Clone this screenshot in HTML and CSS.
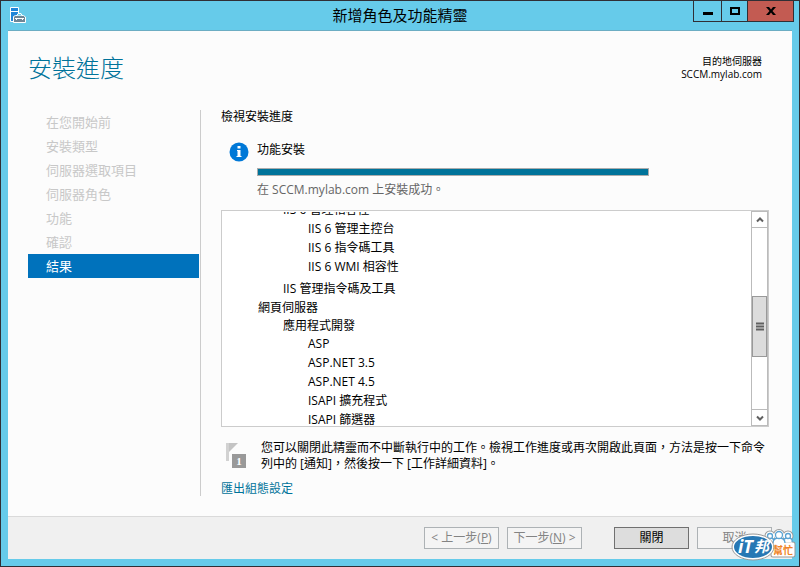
FILE: index.html
```html
<!DOCTYPE html>
<html lang="zh-Hant">
<head>
  <meta charset="UTF-8" />
  <meta name="viewport" content="width=device-width, initial-scale=1.0" />
  <title>新增角色及功能精靈</title>
  <link rel="stylesheet" href="styles.css">
</head>

<body>
  <div class="window">
    <header class="titlebar">
      <svg class="app-icon" width="18" height="18" viewBox="0 0 18 18">
        <path d="M1.500 1.500h8v14h-8z" fill="#1f86d8" stroke="#fff" />
        <path d="M2 5.500h7" stroke="#fff" />
        <path d="M4.500 16.500V10.500L6.500 9.500h8l2 1.500v5.500z" fill="#6f8797" stroke="#fff" />
        <path d="M8 9.500l1-2h3l1 2" fill="#66cbea" stroke="#fff" />
        <path d="M6 12.500h9M7.500 12v2M13.500 12v2" stroke="#fff" />
      </svg>
      <h1>新增角色及功能精靈</h1>
      <div class="controls">
        <button class="ctl" aria-label="最小化">
          <svg width="10" height="12" viewBox="0 0 10 12"><path d="M0 7h10v3H0z" /></svg>
        </button>
        <button class="ctl" aria-label="最大化">
          <svg width="10" height="12" viewBox="0 0 10 12"><path fill-rule="evenodd" d="M0 2h10v8H0zM2 4v4h6V4z" /></svg>
        </button>
        <button class="ctl close" aria-label="關閉視窗">
          <svg width="10" height="12" viewBox="0 0 10 12"><path d="M0 2h3l2 2.500L7 2h3L6.500 6l3.500 4H7L5 7.500 3 10H0l3.500-4z" /></svg>
        </button>
      </div>
    </header>

    <div class="client">
      <div class="page-head">
        <h2>安裝進度</h2>
        <p class="target">目的地伺服器<br>SCCM.mylab.com</p>
      </div>

      <div class="page-body">
        <nav class="steps">
          <ul>
            <li>在您開始前</li>
            <li>安裝類型</li>
            <li>伺服器選取項目</li>
            <li>伺服器角色</li>
            <li>功能</li>
            <li>確認</li>
            <li class="active" aria-current="step">結果</li>
          </ul>
        </nav>

        <main>
          <h3>檢視安裝進度</h3>

          <div class="status">
            <svg class="info" width="20" height="20" viewBox="0 0 20 20">
              <circle cx="10" cy="10" r="9.500" fill="#0078d7" />
              <path d="M8.500 4h3v2.500h-3zM8 8h3.500v6h1v1h-5v-1h1V9H8z" fill="#fff" />
            </svg>
            <div class="status-text">
              <label for="progress">功能安裝</label>
              <progress id="progress" value="100" max="100"></progress>
              <p>在 SCCM.mylab.com 上安裝成功。</p>
            </div>
          </div>

          <div class="results">
            <div class="viewport">
              <ul class="tree">
                <li>IIS 6 管理相容性
                  <ul>
                    <li>IIS 6 管理主控台</li>
                    <li>IIS 6 指令碼工具</li>
                    <li>IIS 6 WMI 相容性</li>
                  </ul>
                </li>
                <li>IIS 管理指令碼及工具</li>
                <li class="role">網頁伺服器</li>
                <li class="group">應用程式開發
                  <ul>
                    <li>ASP</li>
                    <li>ASP.NET 3.5</li>
                    <li>ASP.NET 4.5</li>
                    <li>ISAPI 擴充程式</li>
                    <li>ISAPI 篩選器</li>
                  </ul>
                </li>
              </ul>
            </div>
            <div class="scrollbar">
              <button class="arrow" aria-label="向上捲動">
                <svg width="8" height="6" viewBox="0 0 8 6"><path d="M1 4.500l3-3 3 3" /></svg>
              </button>
              <div class="track">
                <div class="thumb">
                  <svg width="8" height="9" viewBox="0 0 8 9"><path d="M0 1.500h8M0 4.500h8M0 7.500h8" /></svg>
                </div>
              </div>
              <button class="arrow" aria-label="向下捲動">
                <svg width="8" height="6" viewBox="0 0 8 6"><path d="M1 1.500l3 3 3-3" /></svg>
              </button>
            </div>
          </div>

          <div class="note">
            <svg class="flag" width="24" height="28" viewBox="0 0 24 28">
              <path d="M3 1h3v18H3z" fill="#d2d2d2" />
              <path d="M6 1h9L6 10z" fill="#c4c4c4" />
              <rect x="9" y="12" width="14" height="14" fill="#999" />
              <text x="16" y="23" text-anchor="middle">1</text>
            </svg>
            <p>您可以關閉此精靈而不中斷執行中的工作。檢視工作進度或再次開啟此頁面，方法是按一下命令列中的 [通知]，然後按一下 [工作詳細資料]。</p>
          </div>

          <a class="export" href="#">匯出組態設定</a>
        </main>
      </div>

      <footer>
        <button disabled>&lt; 上一步(<u>P</u>)</button>
        <button disabled>下一步(<u>N</u>) &gt;</button>
        <button class="primary">關閉</button>
        <button disabled>取消</button>
      </footer>
    </div>

    <svg class="badge" width="66" height="34" viewBox="0 0 66 34">
      <g fill="#999" stroke="#999" stroke-width="5" stroke-linejoin="round">
        <circle cx="39" cy="7" r="3" />
        <circle cx="48" cy="6" r="3.500" />
        <circle cx="57" cy="7" r="3" />
        <path d="M36 12h25" />
        <rect x="42" y="15" width="20" height="11" />
      </g>
      <g fill="#fff" stroke="#fff" stroke-width="3" stroke-linejoin="round">
        <circle cx="39" cy="7" r="3" />
        <circle cx="48" cy="6" r="3.500" />
        <circle cx="57" cy="7" r="3" />
        <path d="M36 12h25" />
        <rect x="42" y="15" width="20" height="11" />
      </g>
      <g fill="#fff" stroke="#5ba3d2" stroke-width="1.300">
        <path d="M35 13q0-4 4-4t5 4M52 13q0-4 5-4t4 4" />
        <circle cx="39" cy="7" r="2.500" />
        <circle cx="57" cy="7" r="2.500" />
        <path d="M42 14q0-5 6-5t6 5" />
        <circle cx="48" cy="6" r="3.500" />
      </g>
      <ellipse cx="22" cy="18" rx="21" ry="13" fill="#fff" stroke="#999" />
      <ellipse cx="22" cy="18" rx="19" ry="11" fill="#2778b4" />
      <text class="badge-it" x="7" y="24">iT</text>
      <text class="badge-bang" x="23" y="23">邦</text>
      <text class="badge-help" x="42" y="25">幫忙</text>
    </svg>
  </div>
</body>
</html>
```

FILE: styles.css
```css
* {
  box-sizing: border-box;
}

body {
  margin: 0;
  font-family: "Open Sans", "Noto Sans CJK TC", sans-serif;
  font-size: 12px;
  line-height: 16px;
  color: #000;
}

h1, h2, h3, p, ul {
  margin: 0;
  padding: 0;
  font-weight: normal;
}

ul {
  list-style: none;
}

button {
  font: inherit;
  padding: 0;
}

.window {
  position: relative;
  display: flex;
  flex-direction: column;
  height: 100vh;
  padding: 0 7px 7px;
  border: 1px solid #302f35;
  background: #66cbea;
}

/* title bar */
.titlebar {
  display: grid;
  grid-template-columns: 1fr auto 1fr;
  height: 29px;
}

.app-icon {
  margin: 5px 0 0 1px;
}

.titlebar h1 {
  font-size: 15px;
  line-height: 29px;
}

.controls {
  display: flex;
  justify-self: end;
  height: 21px;
  margin-right: -2px;
  border: 1px solid #302f35;
  border-top: 0;
}

.ctl {
  display: flex;
  align-items: center;
  justify-content: center;
  width: 28px;
  border: 0;
  border-right: 1px solid #302f35;
  background: #66cbea;
}

.ctl:nth-child(2) {
  width: 26px;
}

.ctl.close {
  width: 45px;
  border-right: 0;
  background: #c35b52;
}

/* client area */
.client {
  flex: 1;
  display: flex;
  flex-direction: column;
  min-height: 0;
  border-top: 1px solid #6cadc3;
  background: #fcfcfc;
}

.page-head {
  display: flex;
  justify-content: space-between;
  height: 79px;
  padding: 22px 30px 0 20px;
}

.page-head h2 {
  font-size: 24px;
  font-weight: 300;
  line-height: 30px;
  color: #00739a;
}

.target {
  padding-top: 2px;
  font-size: 10px;
  line-height: 13px;
  text-align: right;
}

.page-body {
  flex: 1;
  display: flex;
  min-height: 0;
  padding: 0 23px 20px 20px;
}

.steps {
  flex: none;
  width: 173px;
  padding-right: 1px;
  border-right: 1px solid #ccc;
}

.steps li {
  padding-left: 18px;
  font-size: 13px;
  line-height: 24px;
  color: #c8c8c8;
}

.steps li.active {
  background: #0072bc;
  color: #fff;
}

main {
  flex: 1;
  display: flex;
  flex-direction: column;
  min-width: 0;
  padding-left: 20px;
}

h3 {
  font-size: 12px;
  line-height: 14px;
}

/* progress */
.status {
  display: flex;
  gap: 8px;
  margin: 18px 0 12px 8px;
}

.info {
  flex: none;
}

.status-text {
  flex: 1;
  display: flex;
  flex-direction: column;
}

.status-text p {
  margin-top: 6px;
  color: #666;
}

progress {
  appearance: none;
  width: 392px;
  max-width: 100%;
  height: 8px;
  margin-top: 10px;
  border: 1px solid #acacac;
}

progress::-webkit-progress-bar {
  background: #fff;
}

progress::-webkit-progress-value {
  background: #00739a;
}

/* result list */
.results {
  flex: 1;
  display: flex;
  min-height: 0;
  border: 1px solid #ccc;
  background: #fff;
}

.viewport {
  flex: 1;
  margin-top: 1px;
  overflow: hidden;
}

.tree {
  margin-top: -12px;
  padding-left: 61px;
  line-height: 19px;
}

.tree ul {
  padding: 0 0 3px 25px;
}

.tree .role {
  margin-left: -25px;
}

.tree .group {
  line-height: 17px;
}

.tree .group li {
  line-height: 19px;
}

.scrollbar {
  display: flex;
  flex-direction: column;
  width: 17px;
  border: 1px solid #bbb;
}

.arrow {
  display: flex;
  align-items: center;
  justify-content: center;
  height: 16px;
  border: 0;
  border-bottom: 1px solid #bbb;
  background: #fff;
}

.arrow:last-child {
  border-top: 1px solid #bbb;
  border-bottom: 0;
}

.arrow path {
  fill: none;
  stroke: #606060;
  stroke-width: 2;
}

.track {
  flex: 1;
  display: flex;
  flex-direction: column;
}

/* flexible space above and below the thumb */
.track::before,
.track::after {
  content: "";
  flex: 68;
}

.track::after {
  flex: 52;
}

.thumb {
  display: flex;
  align-items: center;
  justify-content: center;
  height: 61px;
  border: 1px solid #999;
  background: #dcdcdc;
}

.thumb path {
  stroke: #606060;
  stroke-width: 2;
}

/* note below the list */
.note {
  display: flex;
  align-items: center;
  gap: 14px;
  margin: 13px 0 10px 2px;
}

.flag {
  flex: none;
}

.flag text {
  font: bold 11px "Liberation Serif", serif;
  fill: #fff;
}

.export {
  align-self: flex-start;
  line-height: 14px;
  color: #00739a;
  text-decoration: none;
}

/* buttons */
footer {
  display: flex;
  justify-content: flex-end;
  gap: 8px;
  height: 43px;
  padding: 10px 20px 10px;
  border-top: 1px solid #dadada;
  background: #f0f0f0;
}

footer button {
  width: 75px;
  border: 1px solid #707070;
  background: #ddd;
  color: #000;
}

footer button:disabled {
  border-color: #adb2b5;
  background: #f4f4f4;
  color: #838383;
}

footer .primary {
  margin-left: 24px;
}

.badge {
  position: absolute;
  right: 2px;
  bottom: 3px;
}

.badge-it {
  font: italic bold 18px "Open Sans", sans-serif;
  fill: #fff;
}

.badge-bang {
  font: italic bold 15px "Noto Sans CJK TC", sans-serif;
  fill: #fff;
}

.badge-help {
  font: bold 10px "Noto Sans CJK TC", sans-serif;
  fill: #f08326;
}
```
